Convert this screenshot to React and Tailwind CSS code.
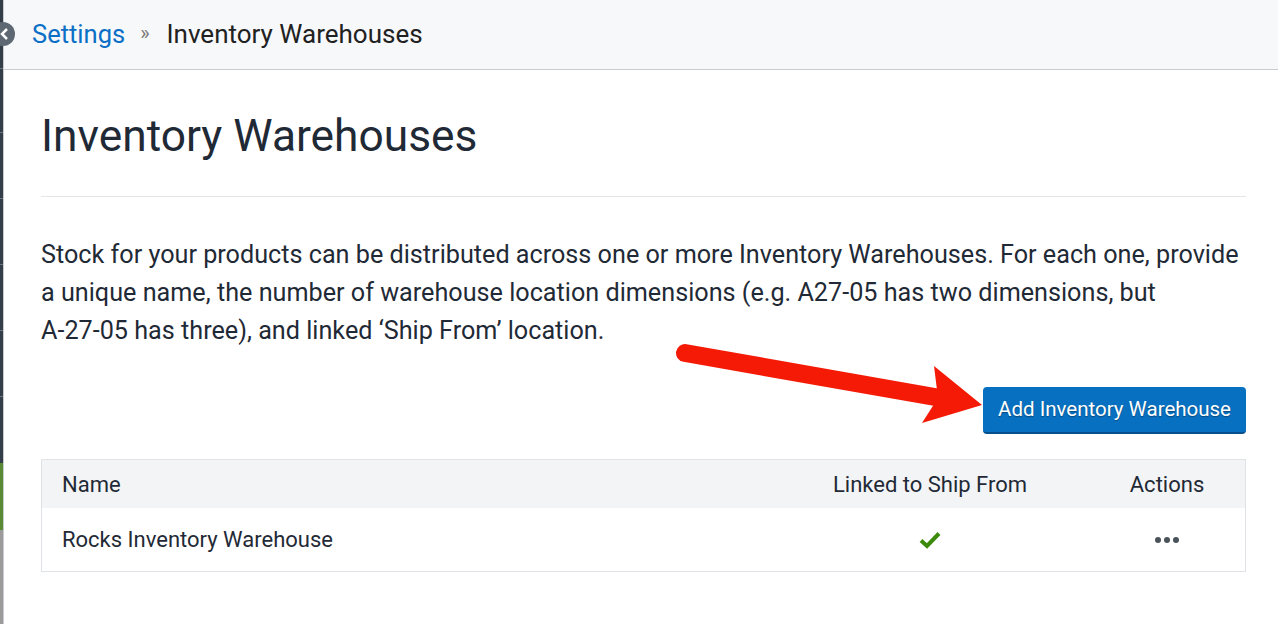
import React from "react";

export default function App() {
  return (
    <div className="relative w-[1278px] h-[624px] overflow-hidden bg-white flex" style={{ fontFamily: "Roboto, 'Liberation Sans', sans-serif" }}>
      {/* left sidebar edge */}
      <div className="w-[4px] h-full flex flex-col shrink-0 border-r border-[#c8ccd0]">
        <div className="h-[69px] bg-[#333e49] border-b border-[#6b7580]" />
        <div className="h-[64px] bg-[#333e49] border-b border-[#6b7580]" />
        <div className="h-[66px] bg-[#333e49] border-b border-[#6b7580]" />
        <div className="h-[66px] bg-[#333e49] border-b border-[#6b7580]" />
        <div className="h-[66px] bg-[#333e49] border-b border-[#6b7580]" />
        <div className="h-[66px] bg-[#333e49] border-b border-[#6b7580]" />
        <div className="h-[66px] bg-[#333e49]" />
        <div className="h-[67px] bg-[#5b8a35]" />
        <div className="flex-1 bg-[#9b9b9b]" />
      </div>

      <div className="flex-1 flex flex-col">
        {/* header */}
        <div className="h-[70px] bg-[#f7f8fa] border-b border-[#c9cdd2] flex items-center pl-[28px] text-[25.5px]">
          <span className="text-[#0b6fc6]">Settings</span>
          <span className="text-[#777] text-[20px] ml-[15px] mr-[17px] mb-[4px]">»</span>
          <span className="text-[#212121] text-[26px]">Inventory Warehouses</span>
        </div>

        {/* content */}
        <div className="pl-[37px] pr-[32px] text-[#1f2a36]">
          <h1 className="text-[44.3px] leading-[48px] mt-[42px] font-normal">Inventory Warehouses</h1>
          <div className="h-px bg-[#e3e5e8] mt-[36px]" />
          <p className="text-[25.2px] leading-[38px] mt-[39px]">
            Stock for your products can be distributed across one or more Inventory Warehouses. For each one, provide a unique name, the number of warehouse location dimensions (e.g. <span className="whitespace-nowrap">A27-05</span> has two dimensions, but <span className="whitespace-nowrap">A-27-05</span> has three), and linked ‘Ship From’ location.
          </p>
          <div className="flex justify-end mt-[37px]">
            <button className="h-[47px] px-[15px] rounded-[4px] bg-[#0870c0] border-b-2 border-[#064f8a] text-white text-[20.5px]" style={{ textShadow: "0 1px 1px rgba(0,0,0,0.35)" }}>
              Add Inventory Warehouse
            </button>
          </div>
          <div className="mt-[25px] border border-[#dfe2e6] text-[22px]">
            <div className="h-[48px] bg-[#f3f4f6] flex items-center">
              <div className="flex-1 pl-[20px]">Name</div>
              <div className="w-[318px] text-center">Linked to Ship From</div>
              <div className="w-[156px] text-center">Actions</div>
            </div>
            <div className="h-[63px] flex items-center">
              <div className="flex-1 pl-[20px]">Rocks Inventory Warehouse</div>
              <div className="w-[318px] flex justify-center">
                <svg width="22" height="18" viewBox="0 0 22 18">
                  <path d="M2 9.5 L8 15 L20 2.5" fill="none" stroke="#3b8a0b" strokeWidth="4" />
                </svg>
              </div>
              <div className="w-[156px] flex justify-center gap-[3px]">
                <span className="w-[6px] h-[6px] rounded-full bg-[#4a525a]" />
                <span className="w-[6px] h-[6px] rounded-full bg-[#4a525a]" />
                <span className="w-[6px] h-[6px] rounded-full bg-[#4a525a]" />
              </div>
            </div>
          </div>
        </div>
      </div>

      {/* collapse button */}
      <div className="absolute left-[-9px] top-[22px] w-[24px] h-[24px] rounded-full bg-[#5d6873] flex items-center justify-end pr-[6px]">
        <svg width="10" height="12" viewBox="0 0 10 12">
          <path d="M8 1 L3 6 L8 11" fill="none" stroke="white" strokeWidth="2.5" />
        </svg>
      </div>

      {/* red arrow annotation */}
      <svg className="absolute left-0 top-0 pointer-events-none" width="1278" height="624">
        <line x1="685" y1="353" x2="935" y2="397" stroke="#f41a06" strokeWidth="18" strokeLinecap="round" />
        <polygon points="934,366 982,405 922,423 938,398" fill="#f41a06" />
      </svg>
    </div>
  );
}
